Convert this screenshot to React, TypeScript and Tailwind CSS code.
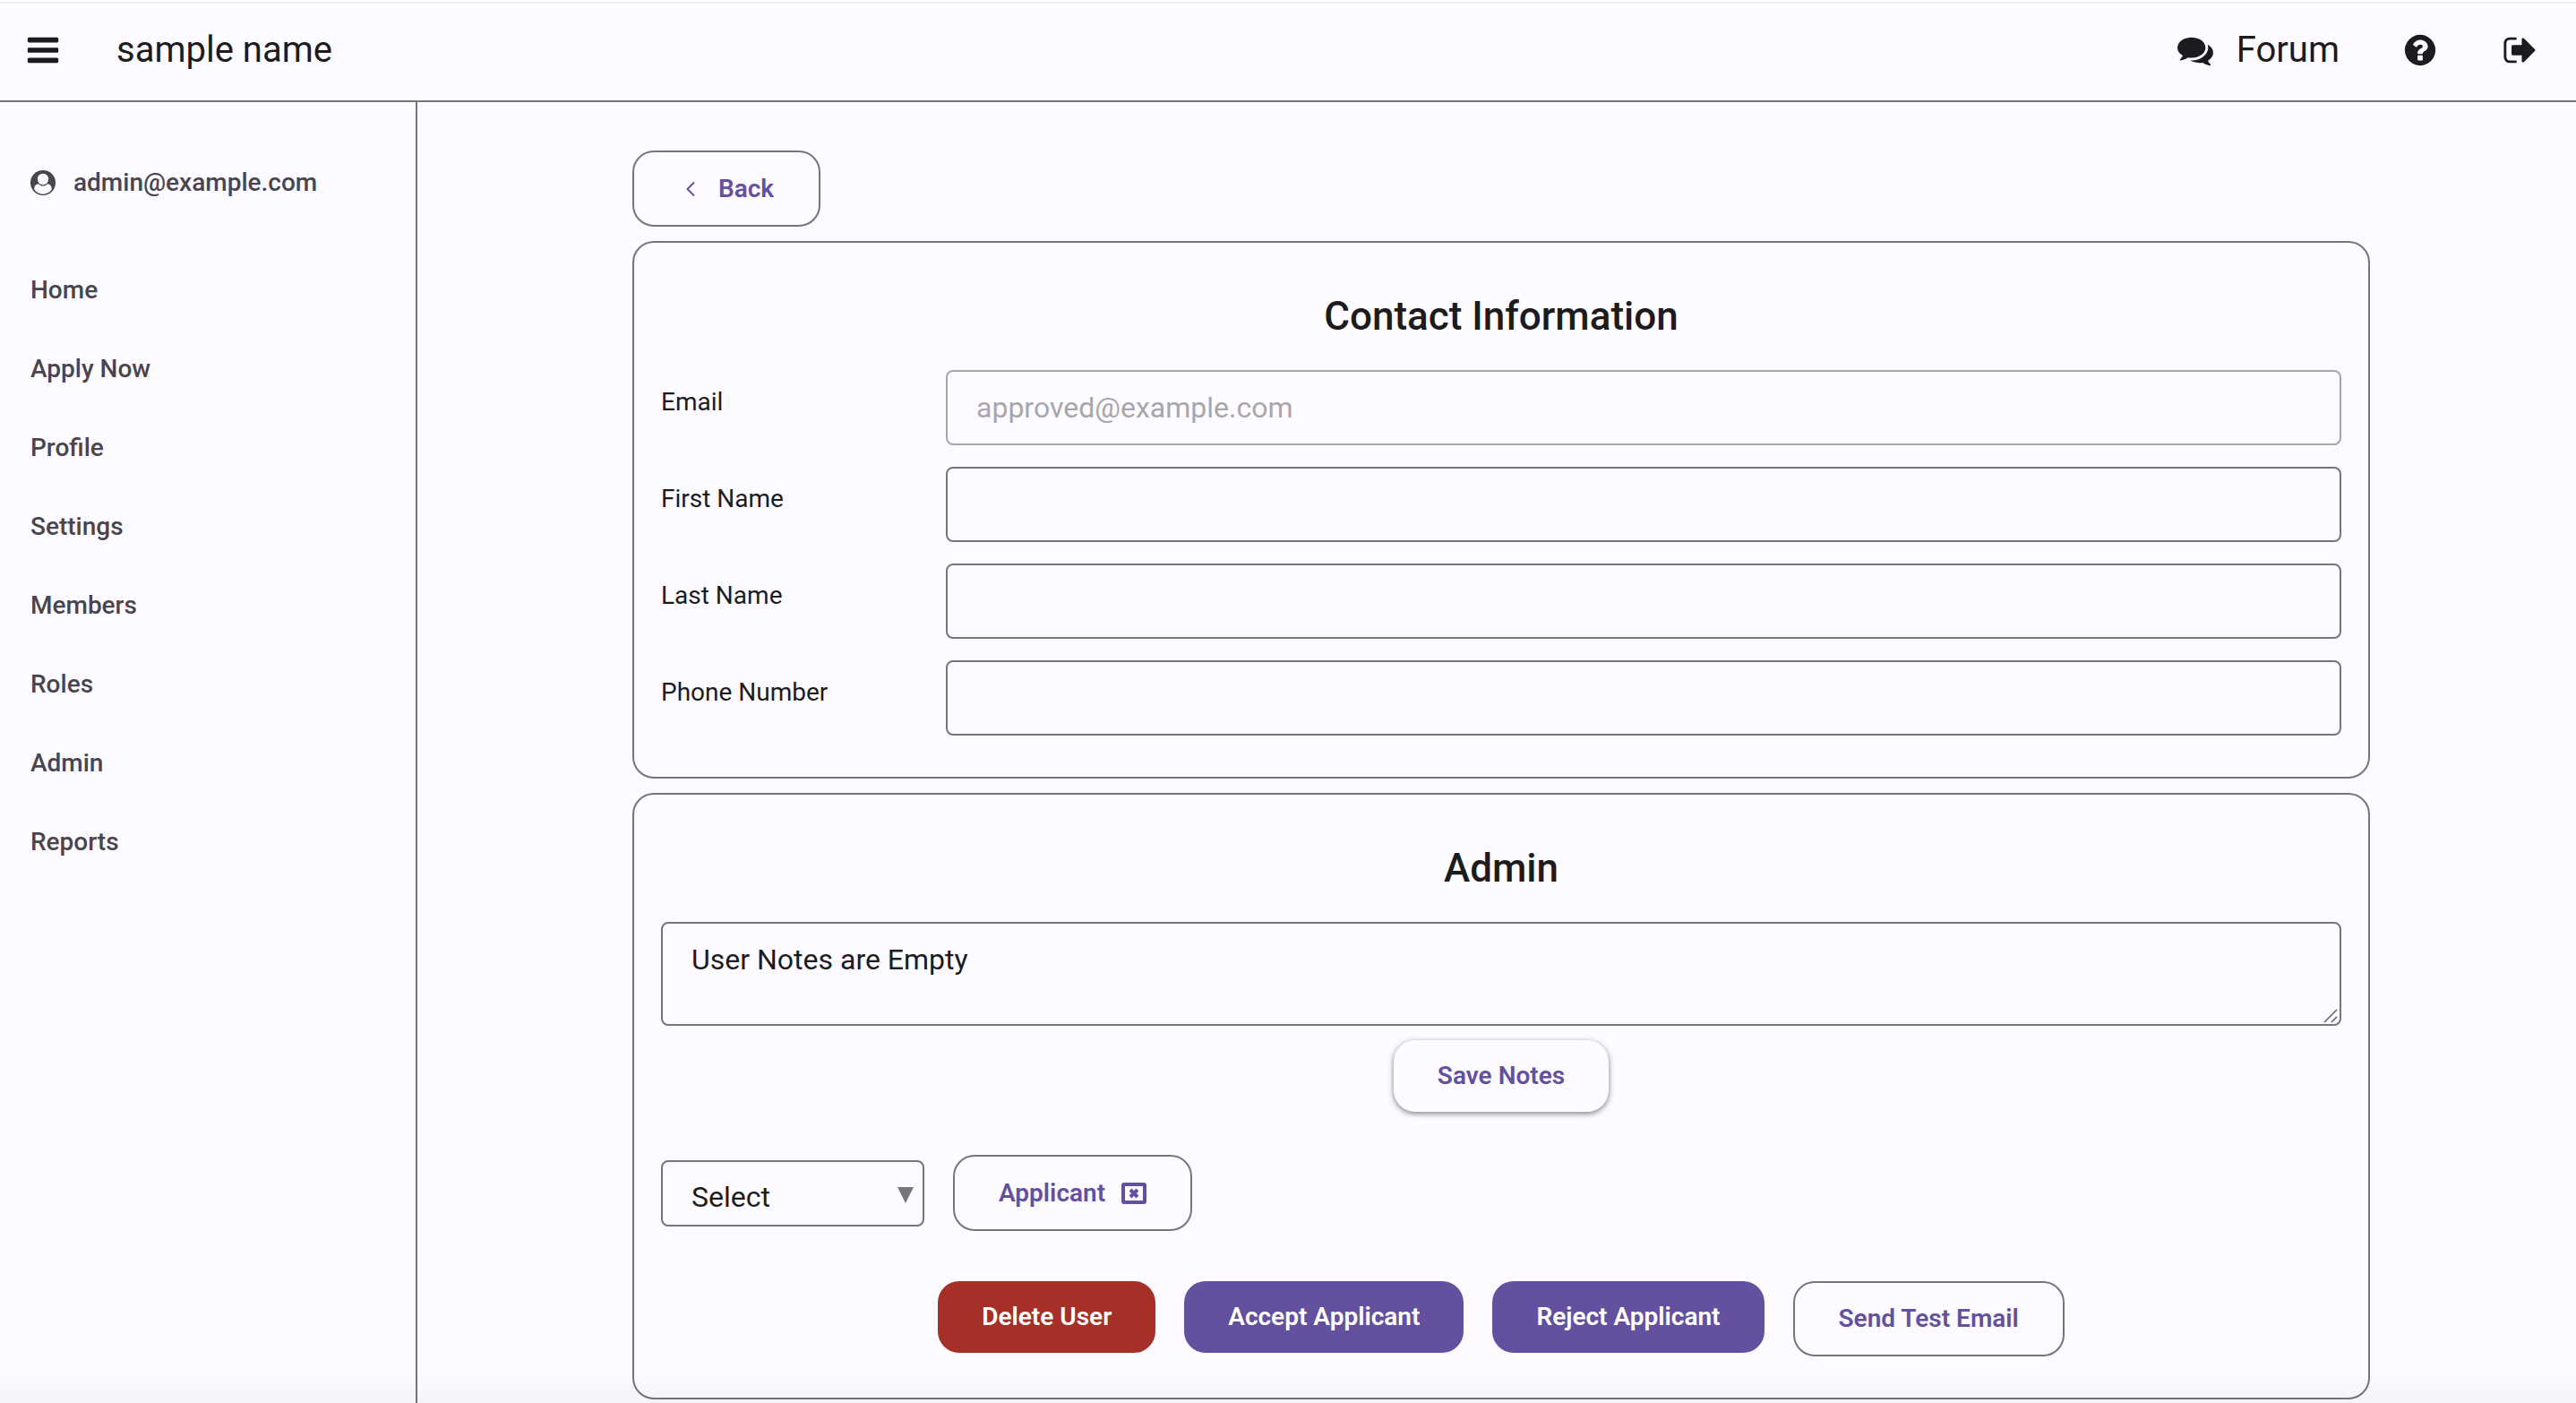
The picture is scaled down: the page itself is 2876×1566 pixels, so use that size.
import React from "react";

const navItems = ["Home", "Apply Now", "Profile", "Settings", "Members", "Roles", "Admin", "Reports"];

const fields = [
  { id: "first", label: "First Name" },
  { id: "last", label: "Last Name" },
  { id: "phone", label: "Phone Number" },
];

const iconPaths = {
  bars: "M1664 1344v128q0 26-19 45t-45 19h-1408q-26 0-45-19t-19-45v-128q0-26 19-45t45-19h1408q26 0 45 19t19 45zm0-512v128q0 26-19 45t-45 19h-1408q-26 0-45-19t-19-45v-128q0-26 19-45t45-19h1408q26 0 45 19t19 45zm0-512v128q0 26-19 45t-45 19h-1408q-26 0-45-19t-19-45v-128q0-26 19-45t45-19h1408q26 0 45 19t19 45z",
  comments:
    "M1408 768q0 139-94 257t-256.5 186.5-353.5 68.5q-86 0-176-16-124 88-278 128-36 9-86 16h-3q-11 0-20.5-8t-11.5-21q-1-3-1-6.5t.5-6.5 2-6l2.5-5 3.5-5.5 4-5 4.5-5 4-4.5q5-6 23-25t26-29.5 22.5-29 25-38.5 20.5-44q-124-72-195-177t-71-224q0-139 94-257t256.5-186.5 353.5-68.5 353.5 68.5 256.5 186.5 94 257zm384 256q0 120-71 224.5t-195 176.5q10 24 20.5 44t25 38.5 22.5 29 26 29.5 23 25q1 1 4 4.5t4.5 5 4 5 3.5 5.5l2.5 5 2 6 .5 6.5-1 6.5q-3 14-13 22t-22 7q-50-7-86-16-154-40-278-128-90 16-176 16-271 0-472-132 58 4 88 4 161 0 309-45t264-129q125-92 192-212t67-254q0-77-23-152 129 71 204 178t75 230z",
  question:
    "M1024 1376v-192q0-14-9-23t-23-9h-192q-14 0-23 9t-9 23v192q0 14 9 23t23 9h192q14 0 23-9t9-23zm256-672q0-88-55.5-163t-138.5-116-170-41q-243 0-371 213-15 24 8 42l132 100q7 6 19 6 16 0 25-12 53-68 86-92 34-24 86-24 48 0 85.5 26t37.5 59q0 38-20 61t-68 45q-63 28-115.5 86.5t-52.5 125.5v36q0 14 9 23t23 9h192q14 0 23-9t9-23q0-19 21.5-49.5t54.5-49.5q32-18 49-28.5t46-35 44.5-48 28-60.5 12.5-81zm384 192q0 209-103 385.5t-279.5 279.5-385.5 103-385.5-103-279.5-279.5-103-385.5 103-385.5 279.5-279.5 385.5-103 385.5 103 279.5 279.5 103 385.5z",
  signOut:
    "M704 1440q0 4 1 20t.5 26.5-3 23.5-10 19.5-20.5 6.5h-320q-119 0-203.5-84.5t-84.5-203.5v-704q0-119 84.5-203.5t203.5-84.5h320q13 0 22.5 9.5t9.5 22.5q0 4 1 20t.5 26.5-3 23.5-10 19.5-20.5 6.5h-320q-66 0-113 47t-47 113v704q0 66 47 113t113 47h312l11.5 1 11.5 3 8 5.5 7 9 2 13.5zm928-544q0 26-19 45l-544 544q-19 19-45 19t-45-19-19-45v-288h-448q-26 0-45-19t-19-45v-384q0-26 19-45t45-19h448v-288q0-26 19-45t45-19 45 19l544 544q19 19 19 45z",
};

function Icon({ name }: { name: keyof typeof iconPaths }) {
  return (
    <svg viewBox="0 0 1792 1792" className="size-10" fill="currentColor" aria-hidden="true">
      <path d={iconPaths[name]} />
    </svg>
  );
}

function UserIcon() {
  return (
    <svg viewBox="0 0 28 28" className="size-7" aria-hidden="true">
      <circle cx="14" cy="14" r="14" fill="currentColor" />
      <path d="M4.200 21.600C4.200 17.800 6 15.300 9 15.200C10.400 16.800 12.200 17.500 14 17.500C15.800 17.500 17.600 16.800 19 15.200C22 15.300 23.800 17.800 23.800 21.600C21.600 24.900 18 26.700 14 26.700C10 26.700 6.400 24.900 4.200 21.600Z" fill="#fdfbff" />
      <circle cx="14" cy="10" r="6.200" fill="#fdfbff" />
    </svg>
  );
}

function BoxedCross() {
  return (
    <svg viewBox="0 0 28 24" className="h-6 w-7" aria-hidden="true" fill="none" stroke="currentColor">
      <rect x="2" y="2" width="24" height="20" rx="1" strokeWidth="4" />
      <path d="M10 8l8 8M18 8l-8 8" strokeWidth="4" />
    </svg>
  );
}

const button = "flex items-center justify-center rounded-[24px] font-semibold";
const outlined = "border-2 border-[#78747e] text-[#63519f]";
const inputBox =
  "h-[84px] min-w-0 flex-1 rounded-lg border-2 border-[#78747e] bg-transparent px-8 text-[32px] disabled:border-[#a8a6aa] disabled:text-[#a8a6aa]";
const card = "rounded-[24px] border-2 border-[#78747e] px-[30px] pb-[46px] pt-[49px]";
const heading = "text-center text-[44px] font-medium leading-[66px]";

export default function App() {
  return (
    <div className="relative flex min-h-screen flex-col bg-[#fdfbff] font-['Roboto',sans-serif] text-[#1c1b1e]">
      <div className="h-1 border-b-2 border-[#f1eff3]" />
      <header className="flex h-[110px] items-center border-b-2 border-[#78747e] pb-1 pl-7 pr-[42px]">
        <button aria-label="Menu"><Icon name="bars" /></button>
        <span className="ml-[62px] text-[40px]">sample name</span>
        <a href="#forum" className="ml-auto flex items-center gap-[26px] text-[40px]">
          <Icon name="comments" />
          Forum
        </a>
        <button aria-label="Help" className="ml-[70px]"><Icon name="question" /></button>
        <button aria-label="Sign out" className="ml-[72px]"><Icon name="signOut" /></button>
      </header>
      <div className="flex flex-1">
        <aside className="w-[466px] shrink-0 border-r-2 border-[#78747e] pl-[34px] pt-[70px] text-[28px] font-medium text-[#49454e]">
          <div className="flex items-center gap-5 leading-10"><UserIcon />admin@example.com</div>
          <nav className="mt-[56px] flex flex-col">
            {navItems.map((n) => (
              <a key={n} href={`#${n}`} className="flex h-[88px] items-center">{n}</a>
            ))}
          </nav>
        </aside>
        <main className="flex-1 pb-1 pl-[240px] pr-[230px] pt-[54px] text-[28px]">
          <button className={`${button} ${outlined} h-[85px] w-[210px] gap-[26px] pl-2`}>
            <svg viewBox="0 0 10 18" className="h-[18px] w-[10px]" fill="none" stroke="currentColor" strokeWidth="2" aria-hidden="true">
              <path d="M9 1.500L1.500 9L9 16.500" />
            </svg>
            Back
          </button>
          <section className={`${card} mt-4`}>
            <h2 className={heading}>Contact Information</h2>
            <div className="mt-[27px] flex flex-col gap-6">
              <div className="flex">
                <label htmlFor="email" className="w-[318px] pt-[15px]">Email</label>
                <input id="email" disabled value="approved@example.com" className={inputBox} />
              </div>
              {fields.map((f) => (
                <div key={f.id} className="flex">
                  <label htmlFor={f.id} className="w-[318px] pt-[15px]">{f.label}</label>
                  <input id={f.id} className={inputBox} />
                </div>
              ))}
            </div>
          </section>
          <section className={`${card} mt-4`}>
            <h2 className={heading}>Admin</h2>
            <textarea
              aria-label="User notes"
              defaultValue="User Notes are Empty"
              className="mt-[27px] block h-[116px] w-full resize-none rounded-lg border-2 border-[#78747e] bg-transparent px-8 py-4 text-[32px] leading-[48px]"
            />
            <div className="pointer-events-none relative">
              <svg viewBox="0 0 16 16" className="absolute bottom-[3px] right-1 size-4" stroke="#5f5c64" strokeWidth="1.500" aria-hidden="true">
                <path d="M1 15L15 1M9 15L15 9" />
              </svg>
            </div>
            <button className={`${button} mx-auto mt-4 h-20 px-[49px] text-[#63519f] shadow-[0_2px_6px_rgba(0,0,0,0.5)]`}>Save Notes</button>
            <div className="mt-12 flex items-center gap-8">
              <div className="relative">
                <select aria-label="Role" className="h-[74px] w-[294px] appearance-none rounded-lg border-2 border-[#78747e] bg-transparent px-8 pt-2 text-[32px]">
                  <option>Select</option>
                </select>
                <svg viewBox="0 0 18 18" className="pointer-events-none absolute right-3 top-[30px] size-[18px]" fill="#78747e" aria-hidden="true">
                  <path d="M0 0H18L9 18Z" />
                </svg>
              </div>
              <button className={`${button} ${outlined} h-[85px] gap-[18px] px-[49px]`}>Applicant<BoxedCross /></button>
            </div>
            <div className="mt-14 flex items-start justify-center gap-8">
              <button className={`${button} h-20 bg-[#a53027] px-[49px] text-white`}>Delete User</button>
              <button className={`${button} h-20 bg-[#63519f] px-[49px] text-white`}>Accept Applicant</button>
              <button className={`${button} h-20 bg-[#63519f] px-[49px] text-white`}>Reject Applicant</button>
              <button className={`${button} ${outlined} h-[84px] px-[49px]`}>Send Test Email</button>
            </div>
          </section>
        </main>
      </div>
      <div className="pointer-events-none absolute inset-x-0 bottom-0 h-10 bg-gradient-to-b from-transparent to-black/3" />
    </div>
  );
}
